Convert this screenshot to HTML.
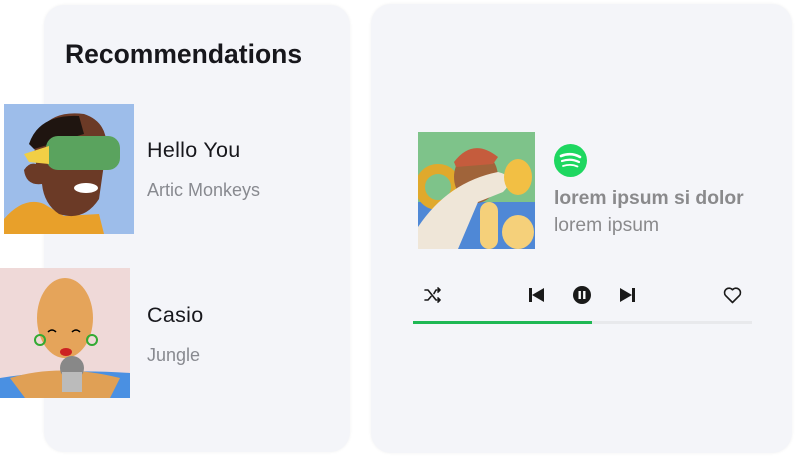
<!DOCTYPE html>
<html><head><style>
*{margin:0;padding:0;box-sizing:border-box}
body{width:797px;height:457px;background:#fff;position:relative;overflow:hidden;font-family:"Liberation Sans",sans-serif}
.card{position:absolute;background:#f4f5f9;border-radius:20px;box-shadow:0 0 3px rgba(0,0,0,0.06)}
.t{position:absolute;white-space:nowrap}
</style></head><body>
<div class="card" style="left:44px;top:5px;width:306px;height:447px"></div>
<div class="card" style="left:371px;top:4px;width:421px;height:449px"></div>
<div class="t" style="left:65px;top:39px;font-size:26.5px;font-weight:bold;color:#17171c">Recommendations</div>

<svg style="position:absolute;left:4px;top:104px" width="130" height="130">
<rect width="130" height="130" fill="#9dbdea"/>
<path d="M0 115 Q20 92 40 100 L60 112 L95 110 L100 130 L0 130Z" fill="#e8a02a"/>
<path d="M30 40 Q40 5 80 10 Q110 20 100 60 L95 95 Q80 118 55 110 Q40 100 38 80 Q22 82 20 66 Q25 58 32 60Z" fill="#6b3a26"/>
<path d="M25 40 Q35 10 75 12 L80 30 L30 45Z" fill="#1f1510"/>
<rect x="42" y="32" width="74" height="34" rx="12" fill="#5aa35e"/>
<path d="M20 50 L45 42 L45 60 L25 58Z" fill="#f1cf45"/>
<ellipse cx="82" cy="84" rx="12" ry="5" fill="#fff"/>
</svg>
<div class="t" style="left:147px;top:138px;font-size:21.5px;letter-spacing:0.3px;color:#17171c">Hello You</div>
<div class="t" style="left:147px;top:180px;font-size:18px;color:#888a90">Artic Monkeys</div>

<svg style="position:absolute;left:0;top:268px" width="130" height="130">
<rect width="130" height="130" fill="#efd9d8"/>
<path d="M0 110 Q60 100 130 105 L130 130 L0 130Z" fill="#4a90e2"/>
<path d="M10 110 Q60 95 120 110 L110 130 L25 130Z" fill="#e0a055"/>
<ellipse cx="65" cy="50" rx="28" ry="40" fill="#e5a45a"/>
<path d="M48 64 Q52 60 56 64 M72 64 Q76 60 80 64" stroke="#000" fill="none" stroke-width="1.5"/>
<ellipse cx="66" cy="84" rx="6" ry="4" fill="#c22"/>
<circle cx="40" cy="72" r="5" fill="none" stroke="#3a3" stroke-width="2"/>
<circle cx="92" cy="72" r="5" fill="none" stroke="#3a3" stroke-width="2"/>
<ellipse cx="72" cy="100" rx="12" ry="12" fill="#888"/>
<rect x="62" y="104" width="20" height="20" fill="#bbb"/>
</svg>
<div class="t" style="left:147px;top:303px;font-size:21.5px;letter-spacing:0.3px;color:#17171c">Casio</div>
<div class="t" style="left:147px;top:345px;font-size:18px;color:#888a90">Jungle</div>

<svg style="position:absolute;left:418px;top:132px" width="117" height="117">
<rect width="117" height="117" fill="#7ec38a"/>
<rect x="0" y="70" width="117" height="47" fill="#4f88d6"/>
<circle cx="20" cy="55" r="18" fill="none" stroke="#e0a92c" stroke-width="10"/>
<ellipse cx="58" cy="45" rx="22" ry="26" fill="#a0643a"/>
<path d="M36 30 Q55 5 80 25 L75 32 L38 35Z" fill="#c55c3d"/>
<path d="M0 95 Q30 50 80 40 Q100 45 85 60 L60 70 L40 117 L0 117Z" fill="#efe6d8"/>
<ellipse cx="100" cy="45" rx="14" ry="18" fill="#f2bf44"/>
<ellipse cx="100" cy="100" rx="16" ry="17" fill="#f5d07a"/>
<rect x="62" y="70" width="18" height="47" rx="9" fill="#f5d07a"/>
</svg>
<svg style="position:absolute;left:554px;top:144px" width="33" height="33" viewBox="0 0 33 33">
<circle cx="16.5" cy="16.5" r="16.5" fill="#1ed760"/>
<path d="M7 12 Q17 8 26 13" stroke="#fff" stroke-width="2.6" fill="none" stroke-linecap="round"/>
<path d="M8 17 Q17 14 25 18" stroke="#fff" stroke-width="2.2" fill="none" stroke-linecap="round"/>
<path d="M9 22 Q17 19.5 23.5 22.5" stroke="#fff" stroke-width="1.8" fill="none" stroke-linecap="round"/>
</svg>
<div class="t" style="left:554px;top:188px;font-size:19.3px;font-weight:bold;color:#8a8a8c">lorem ipsum si dolor</div>
<div class="t" style="left:554px;top:215px;font-size:19.3px;color:#8a8a8c">lorem ipsum</div>

<svg style="position:absolute;left:424px;top:287px" width="18" height="16" viewBox="0 0 18 16" fill="none" stroke="#1a1a1a" stroke-width="1.6" stroke-linecap="round" stroke-linejoin="round">
<path d="M1 3 H4 L12 13 H16 M1 13 H4 L7 9.5 M10 6.5 L12 3 H16 M14 1 L16 3 L14 5 M14 11 L16 13 L14 15"/>
</svg>
<svg style="position:absolute;left:528px;top:287px" width="17" height="16" viewBox="0 0 17 16"><rect x="1" y="1" width="3" height="14" fill="#1a1a1a"/><path d="M16 1 V15 L4 8Z" fill="#1a1a1a"/></svg>
<svg style="position:absolute;left:572px;top:285px" width="20" height="20" viewBox="0 0 20 20"><circle cx="10" cy="10" r="9" fill="#1a1a1a"/><rect x="6.5" y="6" width="2.4" height="8" fill="#fff"/><rect x="11.1" y="6" width="2.4" height="8" fill="#fff"/></svg>
<svg style="position:absolute;left:619px;top:287px" width="17" height="16" viewBox="0 0 17 16"><path d="M1 1 V15 L13 8Z" fill="#1a1a1a"/><rect x="13" y="1" width="3" height="14" fill="#1a1a1a"/></svg>
<svg style="position:absolute;left:723px;top:287px" width="19" height="17" viewBox="0 0 19 17"><path d="M9.5 15.5 L2.6 8.6 A3.9 3.9 0 0 1 9.5 2.8 A3.9 3.9 0 0 1 16.4 8.6Z" fill="none" stroke="#1a1a1a" stroke-width="1.6" stroke-linejoin="round"/></svg>

<div style="position:absolute;left:413px;top:321px;width:339px;height:3px;background:#e8e9ec"></div>
<div style="position:absolute;left:413px;top:321px;width:179px;height:3px;background:#1fb854"></div>
</body></html>
